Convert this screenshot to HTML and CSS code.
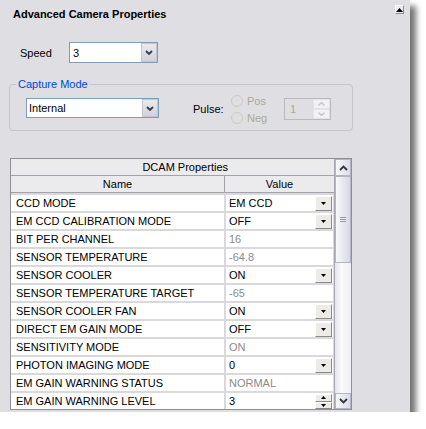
FILE: index.html
```html
<!DOCTYPE html>
<html>
<head>
<meta charset="utf-8">
<title>Advanced Camera Properties</title>
<link rel="stylesheet" href="styles.css">
</head>
<body>
<div class="window">
  <div class="titlebar">
    <span class="title">Advanced Camera Properties</span>
    <span class="collapse"><svg width="7" height="4" viewBox="0 0 7 4"><path d="M0 4H7L3.5 0Z" fill="#000"/></svg></span>
  </div>

  <div class="speed-row">
    <span class="label">Speed</span>
    <div class="combo speed-combo">
      <span class="combo-text">3</span>
      <span class="combo-btn"><svg width="8" height="5" viewBox="0 0 8 5"><path d="M1 1L4 4L7 1" fill="none" stroke="#3a3a44" stroke-width="1.8"/></svg></span>
    </div>
  </div>

  <div class="group">
    <span class="legend">Capture Mode</span>
    <div class="combo mode-combo">
      <span class="combo-text">Internal</span>
      <span class="combo-btn"><svg width="8" height="5" viewBox="0 0 8 5"><path d="M1 1L4 4L7 1" fill="none" stroke="#3a3a44" stroke-width="1.8"/></svg></span>
    </div>
    <span class="pulse">Pulse:</span>
    <div class="radios">
      <div class="radio"><span class="circle"></span><span>Pos</span></div>
      <div class="radio"><span class="circle"></span><span>Neg</span></div>
    </div>
    <div class="spinner">
      <span class="spin-text">1</span>
      <span class="spin-btns">
        <span class="spin-b"><svg width="7" height="4" viewBox="0 0 7 4"><path d="M0.5 3.5L3.5 0.5L6.5 3.5" fill="none" stroke="#c4c4cc" stroke-width="1.4"/></svg></span>
        <span class="spin-b"><svg width="7" height="4" viewBox="0 0 7 4"><path d="M0.5 0.5L3.5 3.5L6.5 0.5" fill="none" stroke="#c4c4cc" stroke-width="1.4"/></svg></span>
      </span>
    </div>
  </div>

  <div class="grid-frame">
    <div class="grid">
      <div class="hdr hdr-top">DCAM Properties</div>
      <div class="hdr-row">
        <div class="hdr hdr-name">Name</div>
        <div class="hdr hdr-value">Value</div>
      </div>
      <div class="rows">
        <div class="cell name">CCD MODE</div>
        <div class="cell value"><span class="vtext">EM CCD</span><span class="dd"><svg width="5" height="3" viewBox="0 0 5 3"><path d="M0 0H5L2.5 3Z" fill="#000"/></svg></span></div>

        <div class="cell name">EM CCD CALIBRATION MODE</div>
        <div class="cell value"><span class="vtext">OFF</span><span class="dd"><svg width="5" height="3" viewBox="0 0 5 3"><path d="M0 0H5L2.5 3Z" fill="#000"/></svg></span></div>

        <div class="cell name">BIT PER CHANNEL</div>
        <div class="cell value ro"><span class="vtext">16</span></div>

        <div class="cell name">SENSOR TEMPERATURE</div>
        <div class="cell value ro"><span class="vtext">-64.8</span></div>

        <div class="cell name">SENSOR COOLER</div>
        <div class="cell value"><span class="vtext">ON</span><span class="dd"><svg width="5" height="3" viewBox="0 0 5 3"><path d="M0 0H5L2.5 3Z" fill="#000"/></svg></span></div>

        <div class="cell name">SENSOR TEMPERATURE TARGET</div>
        <div class="cell value ro"><span class="vtext">-65</span></div>

        <div class="cell name">SENSOR COOLER FAN</div>
        <div class="cell value"><span class="vtext">ON</span><span class="dd"><svg width="5" height="3" viewBox="0 0 5 3"><path d="M0 0H5L2.5 3Z" fill="#000"/></svg></span></div>

        <div class="cell name">DIRECT EM GAIN MODE</div>
        <div class="cell value"><span class="vtext">OFF</span><span class="dd"><svg width="5" height="3" viewBox="0 0 5 3"><path d="M0 0H5L2.5 3Z" fill="#000"/></svg></span></div>

        <div class="cell name">SENSITIVITY MODE</div>
        <div class="cell value ro"><span class="vtext">ON</span></div>

        <div class="cell name">PHOTON IMAGING MODE</div>
        <div class="cell value"><span class="vtext">0</span><span class="dd"><svg width="5" height="3" viewBox="0 0 5 3"><path d="M0 0H5L2.5 3Z" fill="#000"/></svg></span></div>

        <div class="cell name">EM GAIN WARNING STATUS</div>
        <div class="cell value ro"><span class="vtext">NORMAL</span></div>

        <div class="cell name">EM GAIN WARNING LEVEL</div>
        <div class="cell value"><span class="vtext">3</span><span class="spin-cell">
          <span class="sc-b"><svg width="5" height="3" viewBox="0 0 5 3"><path d="M0 3H5L2.5 0Z" fill="#000"/></svg></span>
          <span class="sc-b"><svg width="5" height="3" viewBox="0 0 5 3"><path d="M0 0H5L2.5 3Z" fill="#000"/></svg></span>
        </span></div>
      </div>
    </div>
    <div class="vscroll">
      <div class="sb-btn sb-up"><svg width="9" height="6" viewBox="0 0 9 6"><path d="M1 5L4.5 1.5L8 5" fill="none" stroke="#34343e" stroke-width="1.8"/></svg></div>
      <div class="sb-thumb"><span class="grip"></span></div>
      <div class="sb-track"></div>
      <div class="sb-btn sb-down"><svg width="9" height="6" viewBox="0 0 9 6"><path d="M1 1L4.5 4.5L8 1" fill="none" stroke="#34343e" stroke-width="1.8"/></svg></div>
    </div>
  </div>
</div>
</body>
</html>
```

FILE: styles.css
```css
* { box-sizing: border-box; }
html, body { margin: 0; padding: 0; background: #ffffff; }
body {
  font-family: "Liberation Sans", Arial, sans-serif;
  font-size: 11px;
  color: #000;
}

.window {
  width: 410px;
  height: 412px;
  background: #dfdfe3;
  box-shadow: 6px 6px 6px rgba(0, 0, 0, 0.55);
  overflow: hidden;
}

/* title */
.titlebar {
  display: flex;
  justify-content: space-between;
  align-items: flex-start;
  height: 42px;
  padding: 5px 6px 0 13px;
}
.title { font-weight: bold; line-height: 14px; margin-top: 2px; }
.collapse {
  width: 9px;
  height: 9px;
  display: flex;
  align-items: center;
  justify-content: center;
  padding-top: 1px;
  background: #ececf0;
  border: 1px solid;
  border-color: #ffffff #8c8c94 #8c8c94 #ffffff;
}

/* speed */
.speed-row {
  display: flex;
  align-items: center;
  height: 21px;
  padding-left: 20px;
}
.speed-row .label { width: 49px; line-height: 14px; }

.combo {
  display: flex;
  background: #fff;
  border: 1px solid #7f9db9;
}
.speed-combo { width: 89px; height: 21px; }
.mode-combo { width: 133px; height: 20px; margin: 13px 0 0 16px; }
.combo-text { flex: 1; padding-left: 3px; display: flex; align-items: center; }
.mode-combo .combo-text { padding-left: 2px; }
.combo-btn {
  width: 16px;
  display: flex;
  align-items: center;
  justify-content: center;
  background: linear-gradient(#e9e9ef, #d2d2dc);
  border: 1px solid #c4c4d0;
}

/* group box */
.group {
  position: relative;
  display: flex;
  align-items: flex-start;
  margin: 21px 0 0 9px;
  width: 344px;
  height: 47px;
  border: 1px solid #c4c4ca;
  border-radius: 4px;
}
.legend {
  position: absolute;
  top: -8px;
  left: 6px;
  padding: 0 2px;
  line-height: 14px;
  color: #0046d5;
  background: #dfdfe3;
}
.pulse { margin: 17px 0 0 34px; width: 38px; line-height: 14px; }
.radios { width: 53px; margin-top: 7px; display: flex; flex-direction: column; }
.radio { height: 17px; display: flex; align-items: center; color: #aca899; }
.circle {
  width: 12px;
  height: 12px;
  border: 1px solid #cbc9bf;
  border-radius: 50%;
  margin-right: 4px;
}
.spinner {
  margin-top: 13px;
  width: 47px;
  height: 22px;
  border: 1px solid #b9b9c2;
  display: flex;
}
.spin-text { flex: 1; padding-left: 5px; display: flex; align-items: center; color: #aca899; }
.spin-btns { width: 17px; display: flex; flex-direction: column; }
.spin-b {
  flex: 1;
  display: flex;
  align-items: center;
  justify-content: center;
  background: #f2f2f4;
  border: 1px solid #e2e2e8;
}

/* property grid */
.grid-frame {
  margin: 27px 0 0 10px;
  width: 342px;
  height: 252px;
  border: 1px solid #8f8f98;
  display: flex;
}
.grid { width: 324px; background: #d9d9dd; border-right: 1px solid #a8a8b0; }
.hdr {
  background: #ebebed;
  text-align: center;
  line-height: 16px;
  height: 17px;
  border-bottom: 1px solid #a2a2a8;
}
.hdr-top { text-align: right; padding-right: 106px; }
.hdr-row { display: grid; grid-template-columns: 214px 1fr; }
.hdr-name { border-right: 1px solid #a2a2a8; }
.rows {
  display: grid;
  grid-template-columns: 213px 107px;
  column-gap: 2px;
  row-gap: 2px;
  padding-top: 2px;
}
.cell {
  height: 16px;
  background: #fff;
  display: flex;
  align-items: center;
}
.name { padding-left: 5px; }
.value { padding-left: 3px; }
.vtext { flex: 1; }
.ro .vtext { color: #8a8a8a; }
.dd {
  width: 17px;
  height: 15px;
  margin-top: 1px;
  margin-right: 1px;
  display: flex;
  align-items: center;
  justify-content: center;
  background: #ecebe8;
  border: 1px solid;
  border-color: #ffffff #8a8a8a #8a8a8a #ffffff;
  align-self: flex-start;
}
.spin-cell {
  width: 17px;
  height: 15px;
  margin-top: 1px;
  margin-right: 1px;
  align-self: flex-start;
  display: flex;
  flex-direction: column;
}
.sc-b {
  flex: 1;
  display: flex;
  align-items: center;
  justify-content: center;
  background: #ecebe8;
  border: 1px solid;
  border-color: #ffffff #8a8a8a #8a8a8a #ffffff;
}

/* scrollbar */
.vscroll {
  width: 16px;
  display: flex;
  flex-direction: column;
  background: linear-gradient(to right, #e4e4ec, #fbfbfd 40%, #eeeef4);
}
.sb-btn {
  display: flex;
  align-items: center;
  justify-content: center;
  border: 1px solid #b4b4c4;
  background: linear-gradient(to right, #f6f6fa, #dcdce6);
}
.sb-up { height: 17px; }
.sb-down { height: 16px; }
.sb-thumb {
  height: 87px;
  border: 1px solid #b4b4c4;
  background: linear-gradient(to right, #f8f8fc, #d8d8e4);
  display: flex;
  align-items: center;
  justify-content: center;
}
.grip {
  width: 6px;
  height: 5px;
  border-top: 1px solid #9a9aaa;
  border-bottom: 1px solid #9a9aaa;
  background: linear-gradient(#9a9aaa, #9a9aaa);
  background-size: 6px 1px;
  background-repeat: no-repeat;
  background-position: 0 1px;
}
.sb-track { flex: 1; }
```
